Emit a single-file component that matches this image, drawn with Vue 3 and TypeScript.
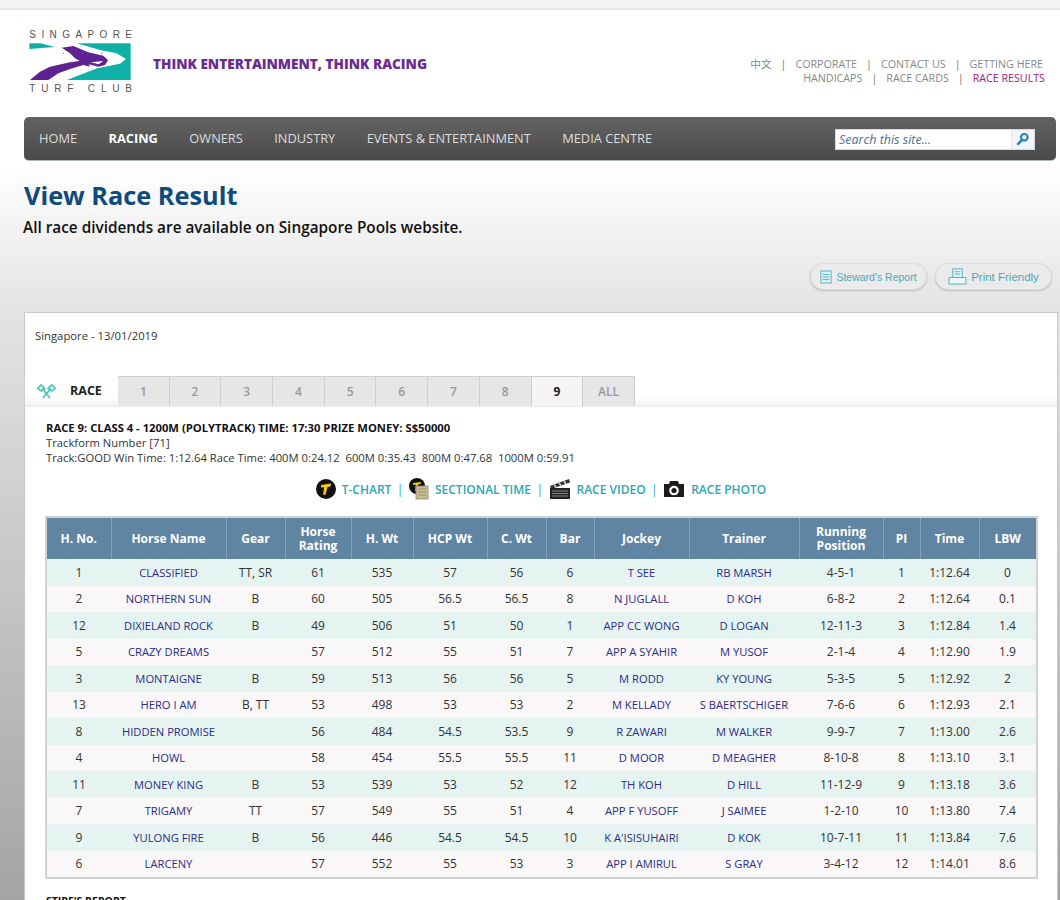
<script setup lang="ts">
interface Result {
  no: number
  horse: string
  gear: string
  rating: number
  hw: number
  hcp: number
  cw: number
  bar: number
  jockey: string
  trainer: string
  running: string
  pl: number
  time: string
  lbw: number
}

const columns = [
  { label: 'H. No.', width: 65 },
  { label: 'Horse Name', width: 115 },
  { label: 'Gear', width: 59 },
  { label: 'Horse Rating', width: 66 },
  { label: 'H. Wt', width: 62 },
  { label: 'HCP Wt', width: 74 },
  { label: 'C. Wt', width: 59 },
  { label: 'Bar', width: 48 },
  { label: 'Jockey', width: 95 },
  { label: 'Trainer', width: 110 },
  { label: 'Running Position', width: 84 },
  { label: 'PI', width: 37 },
  { label: 'Time', width: 59 },
  { label: 'LBW', width: 58 }
];

const results: Result[] = [
  { no: 1, horse: 'CLASSIFIED', gear: 'TT, SR', rating: 61, hw: 535, hcp: 57, cw: 56, bar: 6, jockey: 'T SEE', trainer: 'RB MARSH', running: '4-5-1', pl: 1, time: '1:12.64', lbw: 0 },
  { no: 2, horse: 'NORTHERN SUN', gear: 'B', rating: 60, hw: 505, hcp: 56.5, cw: 56.5, bar: 8, jockey: 'N JUGLALL', trainer: 'D KOH', running: '6-8-2', pl: 2, time: '1:12.64', lbw: 0.1 },
  { no: 12, horse: 'DIXIELAND ROCK', gear: 'B', rating: 49, hw: 506, hcp: 51, cw: 50, bar: 1, jockey: 'APP CC WONG', trainer: 'D LOGAN', running: '12-11-3', pl: 3, time: '1:12.84', lbw: 1.4 },
  { no: 5, horse: 'CRAZY DREAMS', gear: '', rating: 57, hw: 512, hcp: 55, cw: 51, bar: 7, jockey: 'APP A SYAHIR', trainer: 'M YUSOF', running: '2-1-4', pl: 4, time: '1:12.90', lbw: 1.9 },
  { no: 3, horse: 'MONTAIGNE', gear: 'B', rating: 59, hw: 513, hcp: 56, cw: 56, bar: 5, jockey: 'M RODD', trainer: 'KY YOUNG', running: '5-3-5', pl: 5, time: '1:12.92', lbw: 2 },
  { no: 13, horse: 'HERO I AM', gear: 'B, TT', rating: 53, hw: 498, hcp: 53, cw: 53, bar: 2, jockey: 'M KELLADY', trainer: 'S BAERTSCHIGER', running: '7-6-6', pl: 6, time: '1:12.93', lbw: 2.1 },
  { no: 8, horse: 'HIDDEN PROMISE', gear: '', rating: 56, hw: 484, hcp: 54.5, cw: 53.5, bar: 9, jockey: 'R ZAWARI', trainer: 'M WALKER', running: '9-9-7', pl: 7, time: '1:13.00', lbw: 2.6 },
  { no: 4, horse: 'HOWL', gear: '', rating: 58, hw: 454, hcp: 55.5, cw: 55.5, bar: 11, jockey: 'D MOOR', trainer: 'D MEAGHER', running: '8-10-8', pl: 8, time: '1:13.10', lbw: 3.1 },
  { no: 11, horse: 'MONEY KING', gear: 'B', rating: 53, hw: 539, hcp: 53, cw: 52, bar: 12, jockey: 'TH KOH', trainer: 'D HILL', running: '11-12-9', pl: 9, time: '1:13.18', lbw: 3.6 },
  { no: 7, horse: 'TRIGAMY', gear: 'TT', rating: 57, hw: 549, hcp: 55, cw: 51, bar: 4, jockey: 'APP F YUSOFF', trainer: 'J SAIMEE', running: '1-2-10', pl: 10, time: '1:13.80', lbw: 7.4 },
  { no: 9, horse: 'YULONG FIRE', gear: 'B', rating: 56, hw: 446, hcp: 54.5, cw: 54.5, bar: 10, jockey: "K A'ISISUHAIRI", trainer: 'D KOK', running: '10-7-11', pl: 11, time: '1:13.84', lbw: 7.6 },
  { no: 6, horse: 'LARCENY', gear: '', rating: 57, hw: 552, hcp: 55, cw: 53, bar: 3, jockey: 'APP I AMIRUL', trainer: 'S GRAY', running: '3-4-12', pl: 12, time: '1:14.01', lbw: 8.6 }
];

const navItems = ['HOME', 'RACING', 'OWNERS', 'INDUSTRY', 'EVENTS & ENTERTAINMENT', 'MEDIA CENTRE'];
const tabs = ['1', '2', '3', '4', '5', '6', '7', '8', '9', 'ALL'];
const activeTab = '9';
</script>

<template>
  <div class="page">
    <div class="top-strip"></div>

    <header class="header">
      <svg class="logo" viewBox="0 0 360 225" width="120" height="75">
        <text x="28" y="40" class="logo-text" textLength="308">SINGAPORE</text>
        <path fill="#0fb0a8" d="M28 55 H62 L104 66 L28 72 Z" />
        <path fill="#0fb0a8" d="M170 55 H332 V165 H140 L232 130 L300 116 L318 102 L290 85 L240 75 Z" />
        <path fill="#5e2390" d="M125 68 L160 63 L205 82 L250 92 L264 106 L255 120 L235 125 L215 120 L190 114 L165 100 L150 85 Z" />
        <path fill="#5e2390" d="M30 165 L60 140 L90 125 L150 112 L200 105 L210 125 L190 120 L150 132 L115 145 L85 165 Z" />
        <path fill="#fff" d="M212 112 L250 108 L236 118 Z" />
        <circle cx="130" cy="85" r="2" fill="#777" />
        <circle cx="187" cy="85" r="2" fill="#777" />
        <circle cx="245" cy="85" r="2" fill="#777" />
        <text x="28" y="200" class="logo-text" textLength="308">TURF  CLUB</text>
      </svg>
      <div class="tagline">THINK ENTERTAINMENT, THINK RACING</div>
      <div class="top-links">
        <div class="link-row row-one">
          <span class="cjk">中文</span><i>|</i>
          <span>CORPORATE</span><i>|</i>
          <span>CONTACT US</span><i>|</i>
          <span>GETTING HERE</span>
        </div>
        <div class="link-row row-two">
          <span>HANDICAPS</span><i>|</i>
          <span>RACE CARDS</span><i>|</i>
          <span class="current">RACE RESULTS</span>
        </div>
      </div>
    </header>

    <nav class="nav">
      <a v-for="item in navItems" :key="item" :class="{ active: item === 'RACING' }">{{ item }}</a>
      <div class="search">
        <span class="search-text">Search this site...</span>
        <span class="search-btn">
          <svg viewBox="0 0 16 16" width="14" height="14">
            <circle cx="9.5" cy="6" r="3.8" fill="none" stroke="#2a7fb8" stroke-width="2.4" />
            <path d="M6.8 9 L2.5 13.5" stroke="#2a7fb8" stroke-width="3" stroke-linecap="round" />
          </svg>
        </span>
      </div>
    </nav>

    <section class="intro">
      <h1>View Race Result</h1>
      <p>All race dividends are available on Singapore Pools website.</p>
      <div class="actions">
        <button class="pill steward">
          <svg viewBox="0 0 14 16" width="12" height="14">
            <rect x="1" y="1" width="12" height="14" fill="#dff1f3" stroke="#45aebb" />
            <path d="M3 5 H11 M3 8 H11 M3 11 H11" stroke="#45aebb" />
          </svg>
          Steward's Report
        </button>
        <button class="pill">
          <svg viewBox="0 0 20 18" width="19" height="17">
            <rect x="5" y="1" width="10" height="9" fill="#eef7f8" stroke="#45aebb" />
            <path d="M7 4 H13 M7 6.5 H13" stroke="#45aebb" />
            <path d="M1 10 H19 V17 H1 Z" fill="#eef7f8" stroke="#45aebb" />
          </svg>
          Print Friendly
        </button>
      </div>
    </section>

    <main class="card">
      <div class="date">Singapore - 13/01/2019</div>

      <div class="tabs">
        <div class="tab-label">
          <svg viewBox="0 0 24 18" width="21" height="16">
            <g fill="none" stroke="#4fc4bc" stroke-width="2">
              <path d="M7 6 L16 17 M17 6 L8 17" />
              <path d="M2 6 L6 2 L10 6 L6 9 Z" />
              <path d="M14 6 L18 2 L22 6 L18 9 Z" />
            </g>
          </svg>
          <span>RACE</span>
        </div>
        <div v-for="tab in tabs" :key="tab" class="tab" :class="{ active: tab === activeTab }">{{ tab }}</div>
      </div>

      <div class="race-info">
        <strong>RACE 9: CLASS 4 - 1200M (POLYTRACK) TIME: 17:30 PRIZE MONEY: S$50000</strong>
        <div>Trackform Number [71]</div>
        <div>Track:GOOD Win Time: 1:12.64 Race Time: 400M 0:24.12&nbsp; 600M 0:35.43&nbsp; 800M 0:47.68&nbsp; 1000M 0:59.91</div>
      </div>

      <div class="media-links">
        <svg viewBox="0 0 20 20" width="20" height="20">
          <circle cx="10" cy="10" r="10" fill="#111" />
          <path d="M5 6 L15 4.5 L14.5 7.5 L11.5 8 L9.5 16 L7 15.5 L8.2 8.2 L5 8.5 Z" fill="#f5c518" />
        </svg>
        <a>T-CHART</a><i>|</i>
        <svg viewBox="0 0 20 22" width="20" height="22">
          <circle cx="8" cy="8" r="8" fill="#111" />
          <path d="M4 5 L12 4 L11.5 6 L9 6.5 L8 13 L6 13 L6.8 6.6 L4 7 Z" fill="#f5c518" />
          <rect x="7" y="8" width="12" height="13" fill="#c9bd97" stroke="#8d8468" stroke-width="0.8" />
          <path d="M9 11 H17 M9 14 H17 M9 17 H17" stroke="#8d8468" stroke-width="0.8" />
        </svg>
        <a>SECTIONAL TIME</a><i>|</i>
        <svg viewBox="0 0 22 22" width="22" height="22">
          <path d="M1 8 L20 1 L21 4.5 L2 11 Z" fill="#333" />
          <path d="M5 6.5 L7 9 M10 5 L12 7.5 M15 3 L17 6" stroke="#ddd" stroke-width="1.4" />
          <rect x="1" y="10" width="20" height="11" fill="#222" />
          <path d="M3 13 H19 M3 15.5 H19 M3 18 H19" stroke="#888" />
        </svg>
        <a>RACE VIDEO</a><i>|</i>
        <svg viewBox="0 0 22 18" width="22" height="18">
          <path d="M1 4 H6 L7 1 H15 L16 4 H21 V17 H1 Z" fill="#1c1c1c" />
          <circle cx="11" cy="10.5" r="4.8" fill="#fff" />
          <circle cx="11" cy="10.5" r="2.6" fill="#1c1c1c" />
        </svg>
        <a>RACE PHOTO</a>
      </div>

      <table class="results">
        <colgroup>
          <col v-for="col in columns" :key="col.label" :style="{ width: col.width + 'px' }" />
        </colgroup>
        <thead>
          <tr>
            <th v-for="col in columns" :key="col.label">{{ col.label }}</th>
          </tr>
        </thead>
        <tbody>
          <tr v-for="row in results" :key="row.no">
            <td>{{ row.no }}</td>
            <td class="name">{{ row.horse }}</td>
            <td>{{ row.gear }}</td>
            <td>{{ row.rating }}</td>
            <td>{{ row.hw }}</td>
            <td>{{ row.hcp }}</td>
            <td>{{ row.cw }}</td>
            <td>{{ row.bar }}</td>
            <td class="name">{{ row.jockey }}</td>
            <td class="name">{{ row.trainer }}</td>
            <td>{{ row.running }}</td>
            <td>{{ row.pl }}</td>
            <td>{{ row.time }}</td>
            <td>{{ row.lbw }}</td>
          </tr>
        </tbody>
      </table>

      <div class="stipe">STIPE'S REPORT</div>
    </main>
  </div>
</template>

<style scoped>
.page {
  width: 1060px;
  height: 900px;
  overflow: hidden;
  font-family: "Open Sans", "Noto Sans CJK SC", sans-serif;
  background: linear-gradient(#fff 0, #fff 165px, #e3e3e3 312px, #a6a4a2 900px);
}

.top-strip {
  height: 8px;
  background: #f4f4f4;
  border-bottom: 2px solid #e6e6e6;
}

.header {
  height: 107px;
  display: flex;
  align-items: flex-start;
  padding: 15px 15px 0 20px;
  box-sizing: border-box;
}

.logo {
  flex: none;
}

.logo-text {
  font-family: "Liberation Sans", sans-serif;
  font-size: 30px;
  fill: #555;
}

.tagline {
  margin: 29px 0 0 13px;
  font-size: 13.6px;
  font-weight: 800;
  color: #6a2c91;
  white-space: nowrap;
}

.top-links {
  margin-left: auto;
  margin-top: 32px;
  font-size: 10.7px;
  line-height: 14px;
  color: #888;
}

.link-row {
  display: flex;
  justify-content: flex-end;
  white-space: nowrap;
}

.link-row i {
  font-style: normal;
  color: #777;
  margin: 0 9px;
}

.row-one {
  padding-right: 2px;
}

.current {
  color: #a5207f;
}

.nav {
  height: 44px;
  margin: 0 4px 0 24px;
  padding: 0 0 2px 15px;
  display: flex;
  align-items: center;
  gap: 31.5px;
  background: linear-gradient(#636363, #4a4a4a);
  border-radius: 5px;
  border-bottom: 1px solid #a9b3b8;
  box-sizing: border-box;
  font-size: 12.8px;
  color: #ddd;
}

.nav a {
  white-space: nowrap;
}

.nav a.active {
  font-weight: 700;
  color: #fff;
}

.search {
  margin: 3px 21px 0 auto;
  width: 200px;
  height: 21px;
  display: flex;
  background: #fff;
  border: 1px solid #d6dde2;
  box-sizing: border-box;
}

.search-text {
  flex: 1;
  padding-left: 3px;
  font-size: 12.5px;
  font-style: italic;
  line-height: 19px;
  color: #4d7092;
}

.search-btn {
  width: 22px;
  display: flex;
  align-items: center;
  justify-content: center;
  background: #f3f6f8;
  border-left: 1px solid #e3e8ec;
}

.intro {
  padding: 16px 8px 0 24px;
  height: 151px;
  box-sizing: border-box;
}

.intro h1 {
  margin: 0;
  font-size: 25.3px;
  line-height: 36px;
  font-weight: 700;
  color: #0e4a7d;
}

.intro p {
  margin: 4px 0 0 -1px;
  font-size: 15.35px;
  line-height: 20px;
  font-weight: 600;
  color: #111;
}

.actions {
  margin-top: 26px;
  display: flex;
  justify-content: flex-end;
  gap: 8px;
}

.pill {
  width: 117px;
  height: 27px;
  padding: 0;
  display: flex;
  align-items: center;
  justify-content: center;
  gap: 4px;
  border: 1px solid #dcdcdc;
  border-radius: 14px;
  background: #ebebeb;
  box-shadow: 0 1px 2px #bbb;
  font-family: "Liberation Sans", sans-serif;
  font-size: 11.5px;
  color: #4aa9b8;
}

.pill.steward {
  font-size: 10.5px;
}

.card {
  margin: 0 2px 0 24px;
  height: 620px;
  padding-top: 15px;
  background: #fff;
  border: 1px solid #c9c9c9;
  box-sizing: border-box;
}

.date {
  margin-left: 10px;
  font-size: 11.3px;
  line-height: 15px;
  color: #333;
}

.tabs {
  margin-top: 33px;
  height: 30px;
  display: flex;
  background: linear-gradient(#fff 70%, #f1f1f1);
  box-shadow: 0 1px 1px #eee;
}

.tab-label {
  width: 93px;
  padding-left: 11px;
  display: flex;
  align-items: center;
  gap: 13px;
  box-sizing: border-box;
  font-size: 12.5px;
  font-weight: 700;
  color: #222;
}

.tab-label span {
  margin-bottom: 2px;
}

.tab {
  width: 51.7px;
  display: flex;
  align-items: center;
  justify-content: center;
  background: #e6e6e6;
  border: 1px solid #cfcfcf;
  border-bottom: none;
  border-left: none;
  box-sizing: border-box;
  font-size: 12px;
  font-weight: 600;
  color: #999;
}

.tab:first-of-type {
  border-left: 1px solid #cfcfcf;
}

.tab.active {
  background: #f5f5f5;
  font-weight: 700;
  color: #222;
}

.race-info {
  margin: 14px 0 0 21px;
  font-size: 11.25px;
  line-height: 15px;
  color: #333;
}

.race-info strong {
  font-weight: 700;
  color: #111;
}

.media-links {
  margin-top: 12px;
  height: 24px;
  display: flex;
  align-items: center;
  justify-content: center;
  font-size: 12px;
  font-weight: 600;
  color: #2aa7b3;
}

.media-links svg {
  margin-right: 6px;
}

.media-links i {
  font-style: normal;
  font-weight: 400;
  margin: 0 5.5px;
}

.results {
  margin: 15px 0 0 20px;
  width: 991px;
  table-layout: fixed;
  border-collapse: collapse;
  border: 2px solid #cfd3d5;
  font-size: 12px;
  color: #333;
}

.results th {
  height: 41px;
  padding: 0 2px;
  background: #5f85a3;
  border-left: 1px solid #86a3b9;
  font-size: 12px;
  line-height: 14px;
  font-weight: 700;
  color: #fff;
}

.results th:first-child {
  border-left: none;
}

.results td {
  height: 26.5px;
  padding: 0;
  text-align: center;
  white-space: nowrap;
  overflow: hidden;
}

.results tbody tr:nth-child(odd) {
  background: #e6f4f1;
}

.results tbody tr:nth-child(even) {
  background: #f9f7f8;
}

.results td.name {
  font-size: 11.2px;
  color: #2c2c86;
}

.stipe {
  margin: 15px 0 0 21px;
  font-size: 10.5px;
  font-weight: 700;
  line-height: 15px;
  color: #111;
}
</style>
